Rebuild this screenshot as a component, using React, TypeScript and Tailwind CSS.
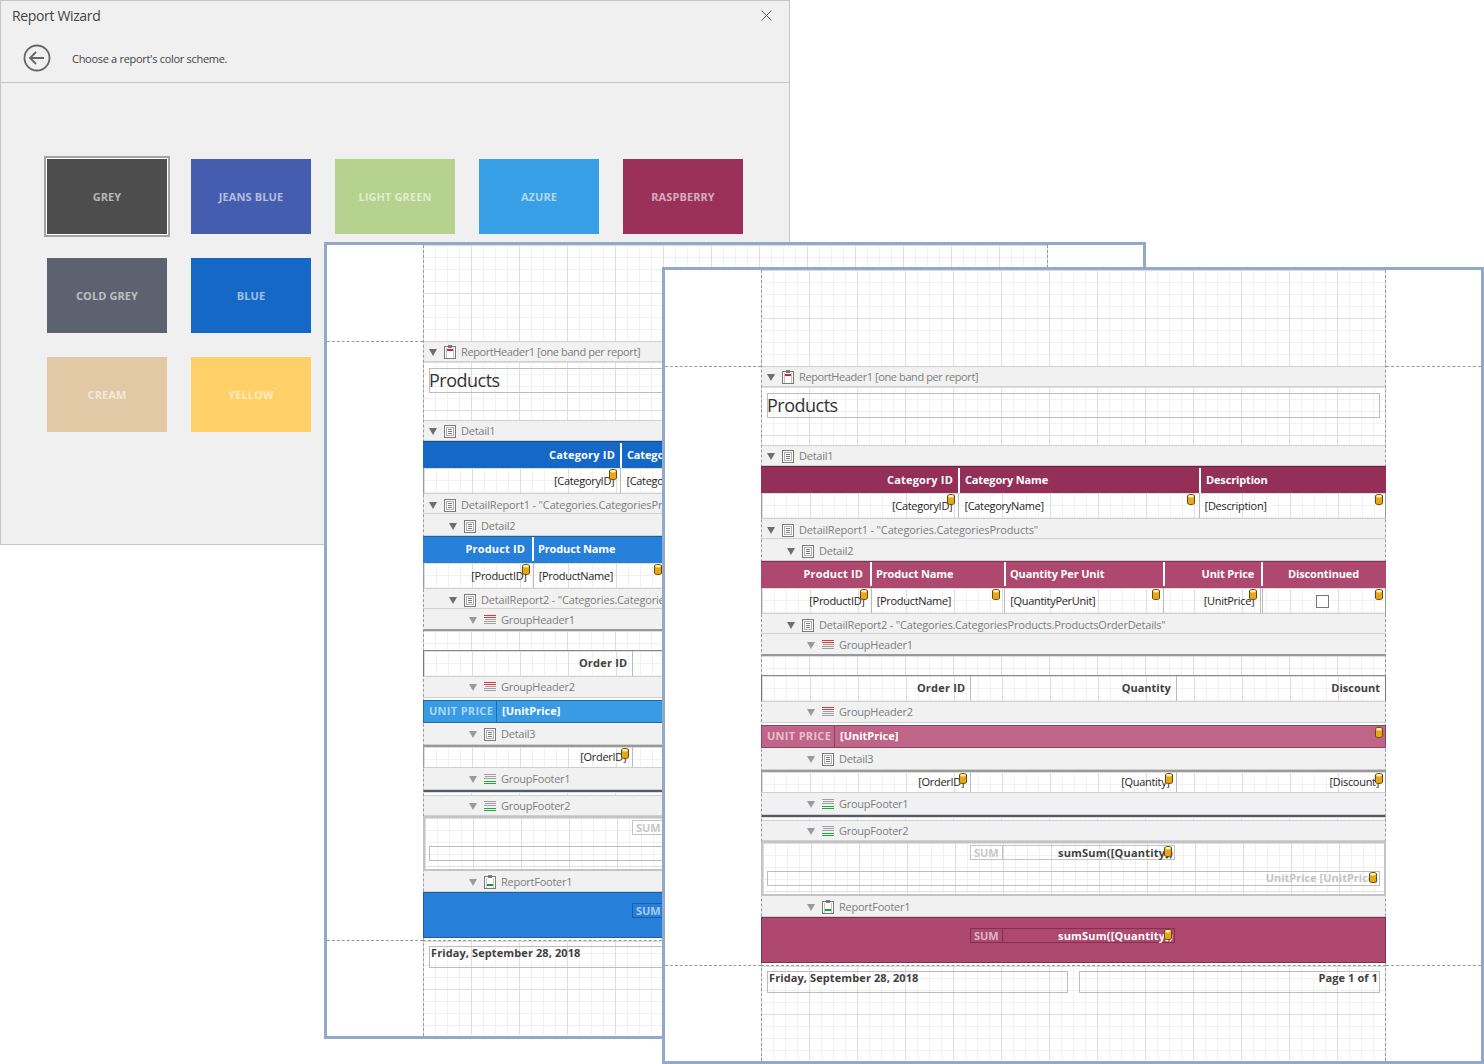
const CAPTION_FONT = "font-['Open_Sans','Noto_Sans',sans-serif]";
const BODY_FONT = "font-['Open_Sans','Noto_Sans',sans-serif]";

const GRID =
  "bg-[linear-gradient(to_right,#dedede_1px,transparent_1px),linear-gradient(to_bottom,#dedede_1px,transparent_1px),linear-gradient(to_right,#f1f1f1_1px,transparent_1px),linear-gradient(to_bottom,#f1f1f1_1px,transparent_1px)] bg-[size:48px_48px,48px_48px,12px_12px,12px_12px]";

type Scheme = {
  head1: string;
  head2: string;
  unit: string;
  unitSep: string;
  footer: string;
  footerBox: string;
};

const BLUE: Scheme = {
  head1: "bg-[#1668c7] border-[#0f4b90]",
  head2: "bg-[#267fd9] border-[#1c5fa6]",
  unit: "bg-[#389be3] border-[#1f6cab]",
  unitSep: "border-[#1f6cab]",
  footer: "bg-[#267fd9] border-[#1c5fa6]",
  footerBox: "border-[#1c5fa6]",
};

const RASPBERRY: Scheme = {
  head1: "bg-[#943058] border-[#6b2240]",
  head2: "bg-[#ae486e] border-[#7d3350]",
  unit: "bg-[#c06488] border-[#8a4461]",
  unitSep: "border-[#8a4461]",
  footer: "bg-[#ae486e] border-[#7d3350]",
  footerBox: "border-[#7d3350]",
};

const SWATCHES = [
  { name: "GREY", color: "bg-[#4d4d4d]", selected: true },
  { name: "JEANS BLUE", color: "bg-[#445dae]" },
  { name: "LIGHT GREEN", color: "bg-[#b6d28f]" },
  { name: "AZURE", color: "bg-[#37a0e6]" },
  { name: "RASPBERRY", color: "bg-[#9b3059]" },
  { name: "COLD GREY", color: "bg-[#5d6270]" },
  { name: "BLUE", color: "bg-[#1668c7]" },
  { name: "CREAM", color: "bg-[#e2c9a5] col-start-1" },
  { name: "YELLOW", color: "bg-[#ffd067]" },
];

type Col = { w: string; head: string; field?: string; right?: boolean; pin?: string; hp?: string };

const CATEGORY_COLS: Col[] = [
  { w: "w-[197px]", head: "Category ID", field: "[CategoryID]", right: true, hp: "pr-[5px] tracking-[0.2px]" },
  { w: "w-[241px]", head: "Category Name", field: "[CategoryName]", pin: "right-[4px]" },
  { w: "w-[187px]", head: "Description", field: "[Description]", pin: "right-[2px]" },
];

const PRODUCT_COLS: Col[] = [
  { w: "w-[109px]", head: "Product ID", field: "[ProductID]", right: true, hp: "pr-[7px] tracking-[0.15px]" },
  { w: "w-[134px]", head: "Product Name", field: "[ProductName]", pin: "right-[4px]", hp: "pl-[4px]" },
  { w: "w-[159px]", head: "Quantity Per Unit", field: "[QuantityPerUnit]", pin: "right-[3px]", hp: "pl-[4px]" },
  { w: "w-[98px]", head: "Unit Price", field: "[UnitPrice]", right: true, hp: "pr-[7px]" },
  { w: "w-[125px]", head: "Discontinued", pin: "right-[2px]", hp: "pr-[2px]" },
];

const ORDER_COLS: Col[] = [
  { w: "w-[209px]", head: "Order ID", field: "[OrderID]", right: true },
  { w: "w-[206px]", head: "Quantity", field: "[Quantity]", right: true },
  { w: "w-[210px]", head: "Discount", field: "[Discount]", right: true, pin: "right-[2px]" },
];

type BandKind = "report" | "reportFooter" | "detail" | "groupHeader" | "groupFooter";

function Triangle({ light }: { light?: boolean }) {
  return (
    <svg width="8" height="7" viewBox="0 0 8 7" className="shrink-0">
      <path d="M0 0h8L4 7z" fill={light ? "#9a9a9a" : "#6e6e6e"} />
    </svg>
  );
}

function BandIcon({ kind }: { kind: BandKind }) {
  if (kind === "groupHeader") {
    return (
      <svg width="12" height="11" viewBox="0 0 12 11" className="shrink-0">
        <rect x="0" y="0" width="12" height="1" fill="#e0383a" />
        <rect x="0" y="2" width="12" height="1" fill="#e0383a" />
        <rect x="1" y="4" width="11" height="1" fill="#a0a0a0" />
        <rect x="0" y="6" width="12" height="1" fill="#a0a0a0" />
        <rect x="0" y="8" width="12" height="1" fill="#a0a0a0" />
      </svg>
    );
  }
  if (kind === "groupFooter") {
    return (
      <svg width="12" height="11" viewBox="0 0 12 11" className="shrink-0">
        <rect x="0" y="0" width="12" height="1" fill="#a0a0a0" />
        <rect x="1" y="2" width="11" height="1" fill="#a0a0a0" />
        <rect x="0" y="4" width="12" height="1" fill="#a0a0a0" />
        <rect x="0" y="7" width="12" height="1" fill="#1fa83c" />
        <rect x="0" y="9" width="12" height="1" fill="#1fa83c" />
      </svg>
    );
  }
  if (kind === "detail") {
    return (
      <svg width="12" height="13" viewBox="0 0 12 13" className="shrink-0">
        <rect x="0.5" y="0.5" width="11" height="12" fill="#fff" stroke="#7a7a7a" />
        <rect x="2.500" y="2.500" width="7" height="8" fill="none" stroke="#b0b0b0" />
        <path d="M4 4.500h4M4 6.500h4M4 8.500h4" stroke="#7a7a7a" fill="none" />
      </svg>
    );
  }
  return (
    <svg width="12" height="14" viewBox="0 0 12 14" className="shrink-0">
      <rect x="0.5" y="1.500" width="11" height="12" fill="#fff" stroke="#7a7a7a" />
      <rect x="4" y="0" width="4" height="3" fill="#7a7a7a" />
      <path d="M2.500 3v10M9.500 3v10" stroke="#c4c4c4" fill="none" />
      <rect
        x="3"
        y={kind === "report" ? 4 : 9}
        width="6"
        height="2"
        fill={kind === "report" ? "#d8232a" : "#10a030"}
      />
    </svg>
  );
}

function DataPin({ className }: { className?: string }) {
  return (
    <svg width="8" height="11" viewBox="0 0 8 11" className={`absolute z-20 ${className ?? "top-[1px] right-[3px]"}`}>
      <path d="M.5 2C.5 1 2 .5 4 .5s3.500.5 3.500 1.500v7c0 1-1.500 1.500-3.500 1.500S.5 10 .5 9z" fill="#e6a817" stroke="#6b4a08" />
      <ellipse cx="4" cy="2.300" rx="2.800" ry="1.200" fill="#fff3c4" />
    </svg>
  );
}

function Caption({
  label,
  level,
  kind,
  className,
  pad = "pt-[2px]",
  track = "tracking-[-0.25px]",
}: {
  label: string;
  level: 0 | 1 | 2;
  kind: BandKind;
  className: string;
  pad?: string;
  track?: string;
}) {
  const indent = level === 0 ? "pl-[6px]" : level === 1 ? "pl-[26px]" : "pl-[46px]";
  return (
    <div
      className={`flex items-center border-b border-[#d0d0d0] bg-[#f1f1f1] ${pad} ${indent} ${className} ${CAPTION_FONT} text-[11px] ${track} whitespace-nowrap text-[#7d7d7d]`}
    >
      <Triangle light={level === 2} />
      <span className="ml-[7px] flex w-[12px] justify-center">
        <BandIcon kind={kind} />
      </span>
      <span className="ml-[5px]">{label}</span>
    </div>
  );
}

function HeaderRow({ cols, fill, pad = "pb-[2px]" }: { cols: Col[]; fill: string; pad?: string }) {
  return (
    <div className={`relative z-10 flex h-[27px] border-t ${pad} ${fill} ${BODY_FONT} text-[11px] font-bold tracking-[-0.15px] text-white`}>
      {cols.map((c, i) => (
        <div
          key={c.head}
          className={`${c.w} flex items-center overflow-hidden whitespace-nowrap ${i > 0 ? "border-l-2 border-white" : ""} ${
            c.head === "Discontinued" ? "justify-center" : c.right ? "justify-end" : ""
          } ${c.hp ?? (c.right ? "pr-[5px]" : "pl-[5px]")}`}
        >
          {c.head}
        </div>
      ))}
    </div>
  );
}

function FieldRow({ cols, height, pad = "pt-[2px]" }: { cols: Col[]; height: string; pad?: string }) {
  return (
    <div className={`relative z-10 flex ${height} border-x border-b border-x-[#9a9a9a] border-b-[#cfcfcf] bg-white ${GRID} ${BODY_FONT} text-[11px] tracking-[-0.3px] text-[#1f1f1f]`}>
      {cols.map((c, i) => (
        <div
          key={c.head}
          className={`relative ${c.w} flex items-center ${pad} whitespace-nowrap ${
            c.head === "Discontinued"
              ? "justify-center border-l-[3px] border-double border-[#bbb] pr-[3px]"
              : i > 0
                ? "border-l border-[#bbb]"
                : ""
          } ${c.right ? "justify-end pr-[6px]" : c.field ? "pl-[5px]" : ""}`}
        >
          {c.field ?? <span className="h-[13px] w-[13px] border border-[#777] bg-white" />}
          <DataPin className={`top-[1px] ${c.pin ?? "right-[3px]"}`} />
        </div>
      ))}
    </div>
  );
}

function OrderHeaderRow() {
  return (
    <div className={`relative z-10 flex h-[26px] border-x border-t border-x-[#777] border-t-[#8a8a8a] bg-white ${GRID} ${BODY_FONT} text-[11px] font-bold text-[#3f3f3f]`}>
      {ORDER_COLS.map((c, i) => (
        <div
          key={c.head}
          className={`${c.w} flex items-center justify-end pr-[5px] whitespace-nowrap ${i === 0 ? "tracking-[0.2px]" : ""} ${i > 0 ? "border-l border-[#bbb]" : ""}`}
        >
          {c.head}
        </div>
      ))}
    </div>
  );
}

function SumBox({ border, text, pinColor }: { border: string; text: string; pinColor?: boolean }) {
  return (
    <div className={`relative flex h-[15px] w-[205px] border ${border} ${BODY_FONT} text-[11px] leading-[13px] font-bold`}>
      <span className={`w-[32px] border-r ${border} pl-[3px] ${pinColor ? "text-white/60" : "text-[#c8c8c8]"}`}>SUM</span>
      <span className={`pl-[55px] tracking-[0.2px] whitespace-nowrap ${text}`}>sumSum([Quantity])</span>
      <DataPin className="top-[0px] right-[2px]" />
    </div>
  );
}

function Designer({ scheme, className }: { scheme: Scheme; className: string }) {
  return (
    <div className={`absolute isolate flex border-[3px] border-[#92a9ca] bg-white ${className}`}>
      <div className="w-[96px] shrink-0">
        <div className="h-[97px] border-b border-dashed border-[#999]" />
        <div className="h-[599px] border-b border-dashed border-[#999]" />
      </div>

      <div className="relative w-[625px] shrink-0">
        <div className="absolute inset-y-0 left-0 border-l border-dashed border-[#999]" />
        <div className="absolute inset-y-0 right-0 border-r border-dashed border-[#999]" />

        <div className={`h-[96px] ${GRID} bg-[position:0_100%]`} />

        <Caption label="ReportHeader1 [one band per report]" level={0} kind="report" className="h-[21px] border-t" pad="pt-[1px]" track="tracking-[-0.4px]" />
        <div className={`h-[58px] px-[6px] pt-[6px] ${GRID}`}>
          <div className="flex h-[25px] items-center border border-[#bdbdbd] font-['Open_Sans',sans-serif] text-[18px] tracking-[-0.5px] text-[#333]">
            <span className="-ml-px">Products</span>
          </div>
        </div>

        <Caption label="Detail1" level={0} kind="detail" className="h-[21px] border-t" />
        <HeaderRow cols={CATEGORY_COLS} fill={scheme.head1} pad="pt-[1px]" />
        <FieldRow cols={CATEGORY_COLS} height="h-[26px]" />

        <Caption label={'DetailReport1 - "Categories.CategoriesProducts"'} level={0} kind="detail" className="h-[20px]" pad="pt-[4px]" track="tracking-[-0.15px]" />
        <Caption label="Detail2" level={1} kind="detail" className="h-[22px]" pad="pt-[4px]" />
        <HeaderRow cols={PRODUCT_COLS} fill={scheme.head2} />
        <FieldRow cols={PRODUCT_COLS} height="h-[26px]" />

        <Caption label={'DetailReport2 - "Categories.CategoriesProducts.ProductsOrderDetails"'} level={1} kind="detail" className="h-[20px]" pad="pt-[4px]" track="tracking-[-0.2px]" />
        <Caption label="GroupHeader1" level={2} kind="groupHeader" className="h-[22px] border-b-2 border-b-[#999]" pad="pt-[3px]" />
        <div className={`h-[19px] ${GRID}`} />
        <OrderHeaderRow />

        <Caption label="GroupHeader2" level={2} kind="groupHeader" className="h-[22px] border-t" pad="pt-[1px]" />
        <div className="h-[2px]" />
        <div className={`relative z-10 flex h-[23px] items-center border ${scheme.unit} ${BODY_FONT} text-[11px] font-bold`}>
          <span className={`flex h-full w-[73px] items-center border-r pl-[5px] tracking-[0.3px] ${scheme.unitSep} text-white/60`}>UNIT PRICE</span>
          <span className="pl-[5px] text-white">[UnitPrice]</span>
          <DataPin className="top-[1px] right-[2px]" />
        </div>

        <Caption label="Detail3" level={2} kind="detail" className="h-[22px]" />
        <div className="border-t-2 border-[#999]">
          <FieldRow cols={ORDER_COLS} height="h-[21px]" pad="pt-0" />
        </div>

        <Caption label="GroupFooter1" level={2} kind="groupFooter" className="h-[22px]" />
        <div className={`h-[5px] border-t-2 border-[#555b66] ${GRID}`} />

        <Caption label="GroupFooter2" level={2} kind="groupFooter" className="h-[21px] border-t" />
        <div className={`relative z-10 h-[55px] border-2 border-[#c4c4c4] bg-white pt-[2px] ${GRID}`}>
          <div className="ml-[207px]">
            <SumBox border="border-[#c4c4c4]" text="text-[#3f3f3f]" />
          </div>
          <div className={`relative mx-[4px] mt-[11px] flex h-[15px] items-center justify-end overflow-hidden border border-[#bdbdbd] pr-[1px] ${BODY_FONT} text-[11px] font-bold whitespace-nowrap text-[#c4c4c4]`}>
            UnitPrice [UnitPrice]
            <DataPin className="top-[0px] right-[2px]" />
          </div>
        </div>

        <Caption label="ReportFooter1" level={2} kind="reportFooter" className="h-[21px]" />
        <div className={`relative z-10 h-[46px] border pt-[10px] ${scheme.footer}`}>
          <div className="ml-[208px]">
            <SumBox border={scheme.footerBox} text="text-white" pinColor />
          </div>
        </div>

        <div className={`mt-[2px] flex h-[95px] gap-[11px] border-t border-dashed border-[#999] px-[6px] pt-[5px] ${GRID} ${BODY_FONT} text-[11px] font-bold tracking-[0.1px] text-[#3f3f3f]`}>
          <div className="h-[22px] w-[301px] border border-[#bdbdbd] pl-[1px] leading-[12px]">Friday, September 28, 2018</div>
          <div className="h-[22px] w-[301px] border border-[#bdbdbd] pr-[1px] text-right leading-[12px]">Page 1 of 1</div>
        </div>
      </div>

      <div className="min-w-0 flex-1">
        <div className="h-[97px] border-b border-dashed border-[#999]" />
        <div className="h-[599px] border-b border-dashed border-[#999]" />
      </div>
    </div>
  );
}

function Wizard() {
  return (
    <div className="absolute top-0 left-0 h-[545px] w-[790px] border border-[#c6c6c6] bg-[#f0f0f0]">
      <div className="flex h-[31px] items-center justify-between pr-[17px] pb-[2px] pl-[11px]">
        <span className="font-['Open_Sans',sans-serif] text-[14px] tracking-[-0.35px] text-[#444]">Report Wizard</span>
        <svg width="11" height="11" viewBox="0 0 11 11">
          <path d="M.5.5l10 10M10.500.5l-10 10" stroke="#555" fill="none" />
        </svg>
      </div>
      <div className="flex h-[51px] items-center border-b border-[#c6c6c6] pt-[2px] pl-[22px]">
        <svg width="28" height="28" viewBox="0 0 28 28">
          <circle cx="14" cy="14" r="12.500" fill="none" stroke="#666" strokeWidth="1.800" />
          <path d="M21 14H7.500M13 8l-6 6 6 6" fill="none" stroke="#666" strokeWidth="1.800" />
        </svg>
        <span className="mt-[3px] ml-[21px] font-['Open_Sans',sans-serif] text-[11px] tracking-[-0.3px] text-[#444]">
          Choose a report's color scheme.
        </span>
      </div>
      <div className="mt-[76px] ml-[46px] grid grid-cols-[repeat(5,120px)] gap-6">
        {SWATCHES.map((s) => (
          <div
            key={s.name}
            className={`flex h-[75px] items-center justify-center pt-[2px] ${s.color} ${BODY_FONT} text-[11px] font-bold tracking-[0.1px] text-white/60 ${
              s.selected ? "shadow-[0_0_0_1px_#fff,0_0_0_3px_#a3a3a3]" : ""
            }`}
          >
            {s.name}
          </div>
        ))}
      </div>
    </div>
  );
}

export default function App() {
  return (
    <div className="relative h-[1064px] w-[1484px] overflow-hidden bg-white">
      <Wizard />
      <Designer scheme={BLUE} className="top-[242px] left-[324px] h-[797px] w-[822px]" />
      <Designer scheme={RASPBERRY} className="top-[267px] left-[662px] h-[797px] w-[822px]" />
    </div>
  );
}
